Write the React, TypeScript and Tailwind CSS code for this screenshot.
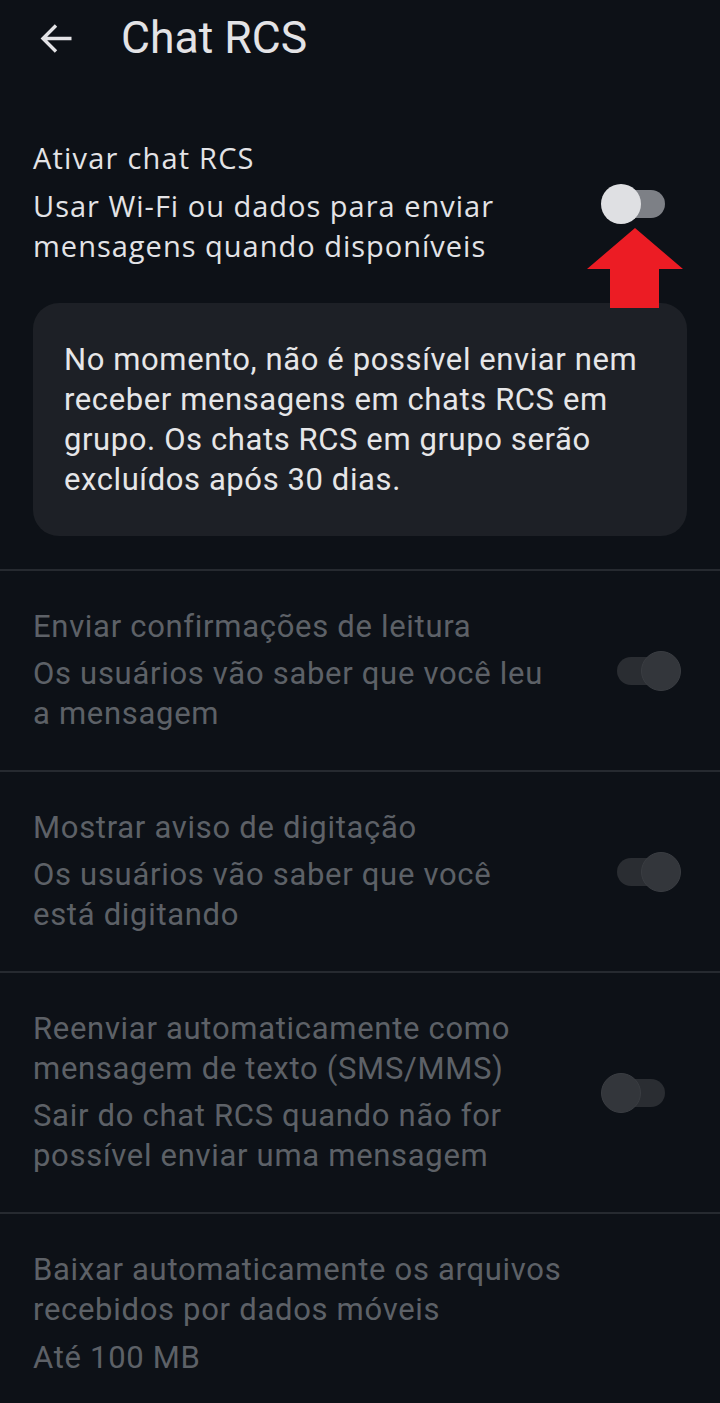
import React from "react";

function Toggle({ on, enabled }: { on: boolean; enabled: boolean }) {
  const track = enabled ? "bg-[#7d8086]" : "bg-[#2a2d32]";
  const thumb = enabled ? "bg-[#dfe0e3]" : "bg-[#33363b] border border-[#3a3d42]";
  return (
    <div className="relative w-[80px] h-[40px] shrink-0">
      <div className={`absolute left-[16px] top-[6px] w-[48px] h-[28px] rounded-full ${track}`} />
      <div
        className={`absolute top-0 w-[40px] h-[40px] rounded-full ${thumb} ${on ? "right-0" : "left-0"}`}
      />
    </div>
  );
}

function Row({
  title,
  subtitle,
  on,
}: {
  title: string[];
  subtitle: string[];
  on: boolean;
}) {
  return (
    <div className="flex items-center justify-between pl-[33px] pr-[39px] py-[36px] border-t-2 border-[#262a30]">
      <div className="flex flex-col gap-[7px] text-[#5d6167] text-[31px] tracking-[0.7px] leading-[40px] font-['Roboto',sans-serif]">
        <div>
          {title.map((t, i) => (
            <div key={i}>{t}</div>
          ))}
        </div>
        <div>
          {subtitle.map((t, i) => (
            <div key={i}>{t}</div>
          ))}
        </div>
      </div>
      <Toggle on={on} enabled={false} />
    </div>
  );
}

export default function App() {
  return (
    <div className="relative w-[720px] h-[1403px] bg-[#0d1117] overflow-hidden font-['Roboto',sans-serif]">
      {/* Header */}
      <div className="flex items-center h-[76px] pl-[40px]">
        <svg width="33" height="33" viewBox="0 0 33 33" className="text-[#e3e3e6]">
          <path
            d="M31.5 16.5H3.5M16 3.5L3 16.5L16 29.5"
            fill="none"
            stroke="currentColor"
            strokeWidth="3.4"
            strokeLinecap="butt"
            strokeLinejoin="miter"
          />
        </svg>
        <div className="ml-[48px] text-[44.5px] leading-none text-[#e3e3e6] font-['Roboto',sans-serif]">
          Chat RCS
        </div>
      </div>

      {/* RCS toggle section */}
      <div className="flex items-center justify-between pl-[33px] pr-[39px] pt-[62px]">
        <div className="flex flex-col gap-[8px] text-[#e3e3e6] text-[29px] tracking-[1.2px] leading-[40px] font-['Open_Sans',sans-serif]">
          <div>Ativar chat RCS</div>
          <div className="tracking-[1px]">
            <div>Usar Wi-Fi ou dados para enviar</div>
            <div>mensagens quando disponíveis</div>
          </div>
        </div>
        <div className="mt-[4px]">
          <Toggle on={false} enabled={true} />
        </div>
      </div>

      {/* Info card */}
      <div className="mx-[33px] mt-[37px] mb-[33px] rounded-[26px] bg-[#1d2026] pl-[31px] pr-[10px] pt-[37px] pb-[36px]">
        <div className="text-[#e6e6e8] text-[31px] tracking-[0.6px] leading-[40px] font-['Roboto',sans-serif]">
          <div>No momento, não é possível enviar nem</div>
          <div>receber mensagens em chats RCS em</div>
          <div>grupo. Os chats RCS em grupo serão</div>
          <div>excluídos após 30 dias.</div>
        </div>
      </div>

      <Row
        title={["Enviar confirmações de leitura"]}
        subtitle={["Os usuários vão saber que você leu", "a mensagem"]}
        on={true}
      />
      <Row
        title={["Mostrar aviso de digitação"]}
        subtitle={["Os usuários vão saber que você", "está digitando"]}
        on={true}
      />
      <Row
        title={["Reenviar automaticamente como", "mensagem de texto (SMS/MMS)"]}
        subtitle={["Sair do chat RCS quando não for", "possível enviar uma mensagem"]}
        on={false}
      />
      <div className="pl-[33px] pr-[39px] pt-[36px] border-t-2 border-[#262a30]">
        <div className="flex flex-col gap-[8px] text-[#5d6167] text-[31px] tracking-[0.7px] leading-[40px] font-['Roboto',sans-serif]">
          <div>
            <div>Baixar automaticamente os arquivos</div>
            <div>recebidos por dados móveis</div>
          </div>
          <div>Até 100 MB</div>
        </div>
      </div>

      {/* Red arrow annotation */}
      <svg
        className="absolute left-[587px] top-[228px]"
        width="97"
        height="81"
        viewBox="0 0 97 81"
      >
        <polygon points="48,0 96,41 72,41 72,80 23,80 23,41 0,41" fill="#ec1c24" />
      </svg>
    </div>
  );
}
